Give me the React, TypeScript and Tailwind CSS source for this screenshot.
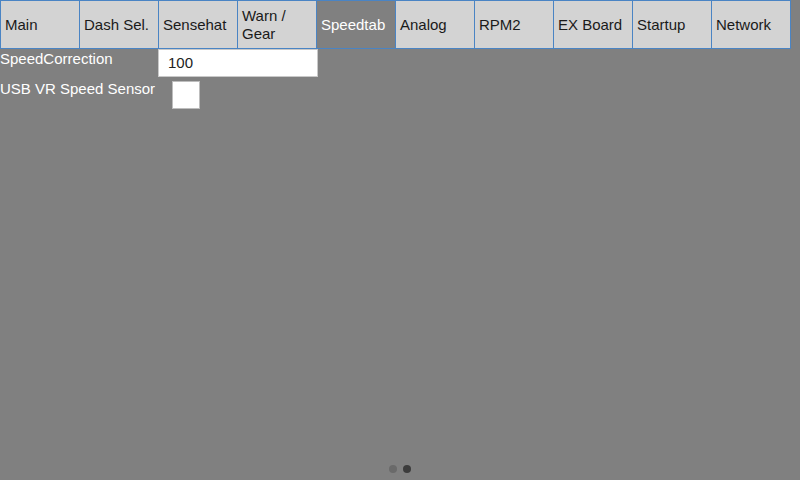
import React from "react";

const tabs = ["Main", "Dash Sel.", "Sensehat", "Warn / Gear", "Speedtab", "Analog", "RPM2", "EX Board", "Startup", "Network"];

export default function App() {
  return (
    <div
      className="w-[800px] h-[480px] bg-[#808080] flex flex-col overflow-hidden"
      style={{ fontFamily: '"Liberation Sans", Arial, sans-serif' }}
    >
      <div className="flex h-[49px] shrink-0">
        {tabs.map((t) => {
          const active = t === "Speedtab";
          return (
            <div
              key={t}
              className={
                "w-[80px] h-[49px] -mr-px border border-[#4a84c4] flex items-center pl-[4px] pr-[4px] text-[15px] leading-[18px] " +
                (active ? "bg-[#808080] text-white" : "bg-[#d3d3d3] text-[#1a1a1a]")
              }
            >
              {t}
            </div>
          );
        })}
      </div>
      <div className="flex items-start">
        <div className="w-[158px] pl-0 pt-px text-[15px] leading-[18px] text-white">SpeedCorrection</div>
        <div className="w-[160px] h-[28px] bg-white border border-[#c9c9c9] flex items-center pl-[9px] text-[15px] text-[#222]">
          100
        </div>
      </div>
      <div className="flex items-start mt-[4px]">
        <div className="w-[172px] pl-0 -mt-[1px] text-[15px] leading-[18px] text-white">USB VR Speed Sensor</div>
        <div className="w-[28px] h-[28px] bg-white border border-[#bdbdbd]" />
      </div>
      <div className="mt-auto flex justify-center gap-[6px] pb-[7px]">
        <div className="w-[8px] h-[8px] rounded-full bg-[#6a6a6a]" />
        <div className="w-[8px] h-[8px] rounded-full bg-[#3c3c3c]" />
      </div>
    </div>
  );
}
